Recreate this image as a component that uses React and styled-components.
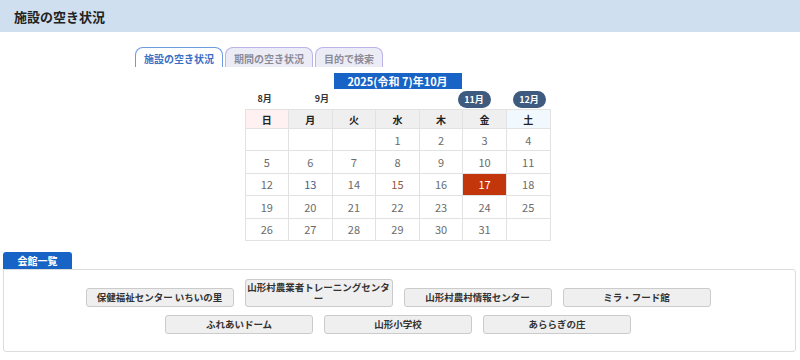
import React from 'react';
import styled, { createGlobalStyle } from 'styled-components';

const Global = createGlobalStyle`
  html, body { margin: 0; padding: 0; background: #fff; }
  body {
    font-family: "Noto Sans CJK JP", "Noto Sans", sans-serif;
    color: #333;
  }
`;

const Header = styled.header`
  height: 32px;
  background: #cfdff0;
  display: flex;
  align-items: center;
  padding-left: 14px;
  font-size: 13px;
  font-weight: 700;
  color: #222;
`;

const Main = styled.main`
  padding-right: 5px;
`;

const TabBar = styled.nav`
  width: 525px;
  margin: 15px auto 0;
  display: flex;
  gap: 2px;
`;

const Tab = styled.div`
  height: 20px;
  box-sizing: border-box;
  padding: 1px 8px 0;
  display: flex;
  align-items: center;
  font-size: 10px;
  font-weight: 700;
  border: 1px solid ${(p) => (p.$active ? '#6d9be0' : '#bcb4e8')};
  border-bottom: none;
  border-radius: 8px 8px 0 0;
  background: ${(p) => (p.$active ? '#fff' : '#ececf6')};
  color: ${(p) => (p.$active ? '#3a6fc4' : '#8b8b98')};
`;

const Calendar = styled.section`
  width: 306px;
  margin: 6px auto 0;
`;

const Title = styled.div`
  width: 128px;
  height: 16px;
  margin: 0 auto;
  background: #1763c6;
  color: #fff;
  font-size: 11px;
  font-weight: 700;
  display: flex;
  align-items: center;
  justify-content: center;
`;

const MonthRow = styled.div`
  height: 19px;
  display: flex;
  align-items: flex-end;
  margin-bottom: 1px;
`;

const PrevMonth = styled.span`
  font-size: 9px;
  font-weight: 700;
  color: #333;
  line-height: 12px;
  margin-bottom: 3px;
  margin-left: ${(p) => p.$ml}px;
`;

const Spacer = styled.div`
  flex: 1;
`;

const NextMonth = styled.span`
  height: 17px;
  width: 33px;
  border-radius: 9px;
  background: #3e5a7e;
  color: #fff;
  font-size: 9px;
  font-weight: 700;
  display: flex;
  align-items: center;
  justify-content: center;
  margin-right: ${(p) => p.$mr}px;
`;

const Table = styled.table`
  width: 306px;
  border-collapse: collapse;
  table-layout: fixed;
`;

const HeadCell = styled.th`
  height: 18px;
  padding: 0;
  border: 1px solid #e2e2e2;
  font-size: 10px;
  font-weight: 700;
  color: #222;
  background: ${(p) => p.$bg};
`;

const DayCell = styled.td`
  height: 21.4px;
  padding: 0;
  border: 1px solid #e2e2e2;
  text-align: center;
  font-size: 11px;
  color: ${(p) => (p.$selected ? '#fff' : p.$color || '#6b6b6b')};
  background: ${(p) => (p.$selected ? '#c3360b' : '#fff')};
`;

const Facilities = styled.section`
  margin: 11px 4px 0 3px;
`;

const FacTab = styled.div`
  width: 69px;
  height: 17px;
  background: #1763c6;
  color: #fff;
  font-size: 10px;
  font-weight: 700;
  border-radius: 3px 3px 0 0;
  display: flex;
  align-items: center;
  justify-content: center;
`;

const Panel = styled.div`
  border: 1px solid #dcdcdc;
  border-radius: 0 3px 3px 3px;
  padding: 9px 3px 17px 0;
  display: flex;
  flex-direction: column;
  gap: 8px;
`;

const FacRow = styled.div`
  display: flex;
  justify-content: center;
  align-items: flex-end;
  gap: 11px;
`;

const FacButton = styled.button`
  width: 148px;
  min-height: 19px;
  box-sizing: border-box;
  padding: 2px 1px;
  background: #efefef;
  border: 1px solid #cbcbcb;
  border-radius: 3px;
  font-family: inherit;
  font-size: 9.5px;
  font-weight: 700;
  line-height: 11px;
  color: #333;
  text-align: center;
  word-break: break-all;
`;

const headers = [
  { label: '日', bg: '#fff1f1' },
  { label: '月', bg: '#efefef' },
  { label: '火', bg: '#efefef' },
  { label: '水', bg: '#efefef' },
  { label: '木', bg: '#efefef' },
  { label: '金', bg: '#efefef' },
  { label: '土', bg: '#f1f8fe' },
];

const dayColors = { 13: '#3f5f8f', 15: '#8a5a3c' };

function buildWeeks() {
  const cells = [null, null, null];
  for (let d = 1; d <= 31; d++) cells.push(d);
  while (cells.length % 7) cells.push(null);
  const weeks = [];
  for (let i = 0; i < cells.length; i += 7) weeks.push(cells.slice(i, i + 7));
  return weeks;
}

const rows = [
  [
    '保健福祉センター いちいの里',
    '山形村農業者トレーニングセンター',
    '山形村農村情報センター',
    'ミラ・フード館',
  ],
  ['ふれあいドーム', '山形小学校', 'あららぎの庄'],
];

export default function App() {
  const weeks = buildWeeks();
  return (
    <>
      <Global />
      <Header>施設の空き状況</Header>
      <Main>
        <TabBar>
          <Tab $active>施設の空き状況</Tab>
          <Tab>期間の空き状況</Tab>
          <Tab>目的で検索</Tab>
        </TabBar>
        <Calendar>
          <Title>2025(令和 7)年10月</Title>
          <MonthRow>
            <PrevMonth $ml={13}>8月</PrevMonth>
            <PrevMonth $ml={43}>9月</PrevMonth>
            <Spacer />
            <NextMonth $mr={22}>11月</NextMonth>
            <NextMonth $mr={5}>12月</NextMonth>
          </MonthRow>
          <Table>
            <thead>
              <tr>
                {headers.map((h) => (
                  <HeadCell key={h.label} $bg={h.bg}>{h.label}</HeadCell>
                ))}
              </tr>
            </thead>
            <tbody>
              {weeks.map((w, i) => (
                <tr key={i}>
                  {w.map((d, j) => (
                    <DayCell key={j} $selected={d === 17} $color={dayColors[d]}>
                      {d ?? ''}
                    </DayCell>
                  ))}
                </tr>
              ))}
            </tbody>
          </Table>
        </Calendar>
      </Main>
      <Facilities>
        <FacTab>会館一覧</FacTab>
        <Panel>
          {rows.map((r, i) => (
            <FacRow key={i}>
              {r.map((n) => (
                <FacButton key={n}>{n}</FacButton>
              ))}
            </FacRow>
          ))}
        </Panel>
      </Facilities>
    </>
  );
}
